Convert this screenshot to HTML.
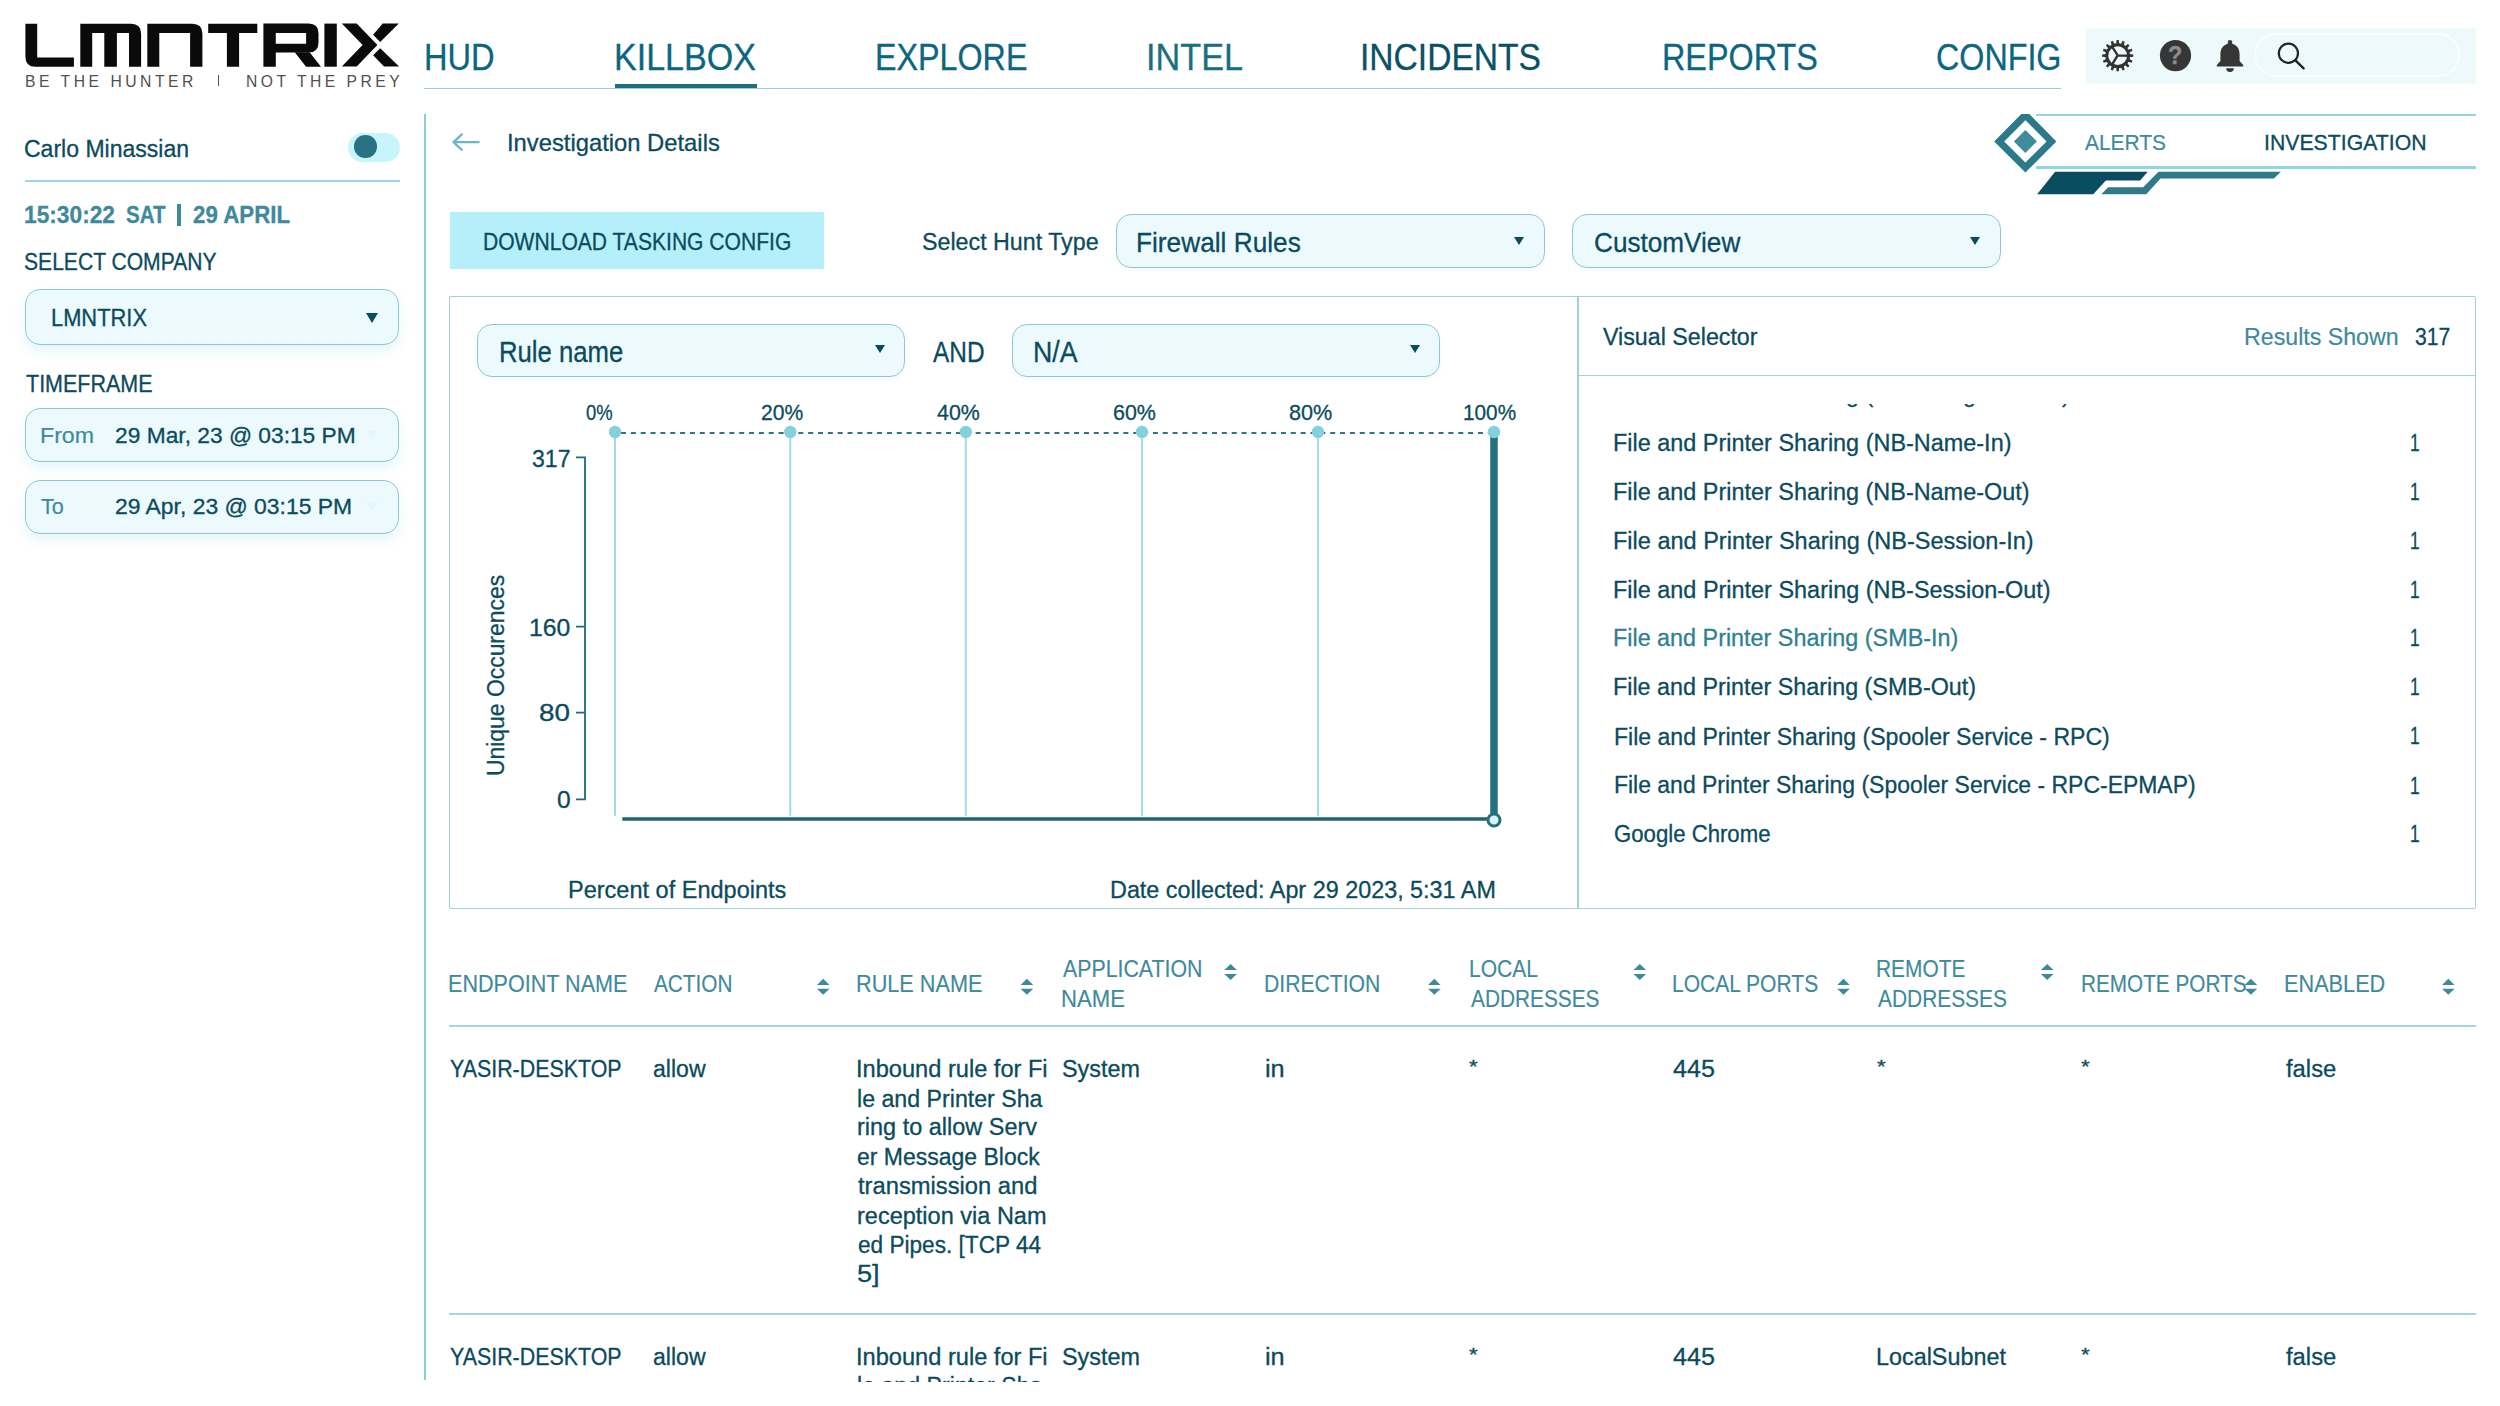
<!DOCTYPE html>
<html><head><meta charset="utf-8"><title>LMNTRIX Killbox</title>
<style>
html,body{margin:0;padding:0;background:#ffffff;width:2500px;height:1406px;overflow:hidden;position:relative}
body{font-family:"Liberation Sans",sans-serif}
.t{position:absolute;white-space:pre;line-height:1;transform-origin:0 0;-webkit-text-stroke:0.3px currentColor}
.dd{position:absolute;box-sizing:border-box;border:1.5px solid #92c6d2;background:#ecfafd;border-radius:15px;box-shadow:0 2px 4px rgba(150,200,215,0.12)}
.tri{position:absolute;width:0;height:0;border-left:6px solid transparent;border-right:6px solid transparent;border-top:9px solid #0b4b5d}
svg{position:absolute;left:0;top:0;overflow:visible}
</style></head><body>
<svg width="2500" height="1406" viewBox="0 0 2500 1406">
<path fill="#0a0a0a" d="M25.4,23.8 H37.2 V57.6 H73.9 V66.7 H35.4 Q25.4,66.7 25.4,56.7 Z"/>
<path fill="#0a0a0a" d="M80.3,23.8 H131.1 Q141.1,23.8 141.1,33.8 V66.7 H129 V32.9 H116.9 V66.7 H104.3 V32.9 H92.2 V66.7 H80.3 Z"/>
<path fill="#0a0a0a" d="M147.3,23.8 H192.4 Q202.4,23.8 202.4,33.8 V66.7 H190.1 V32.9 H159.3 V66.7 H147.3 Z"/>
<path fill="#0a0a0a" d="M208.2,23.8 H257.3 V32.9 H239.1 V66.7 H226.9 V32.9 H208.2 Z"/>
<path fill="#0a0a0a" fill-rule="evenodd" d="M263.4,23.6 H308.5 Q318.5,23.6 318.5,33.6 V42.5 Q318.5,52.5 308.5,52.5 H275.8 V66.7 H263.4 Z M275.8,33 H306.1 V43.8 H275.8 Z"/>
<path fill="#0a0a0a" d="M294.7,52.3 L309.6,52.3 L321,66.7 L306.1,66.7 Z"/>
<path fill="#0a0a0a" d="M324.4,23.6 H336.8 V66.7 H324.4 Z"/>
<path fill="#0a0a0a" d="M341.8,23.5 L356.7,23.5 L377.4,45.1 L356.7,66.6 L341.8,66.6 L362.6,45.1 Z"/>
<path fill="#0a0a0a" d="M382.7,23.5 L398.8,23.5 L380.2,42 L373.1,34.8 Z"/>
<path fill="#0a0a0a" d="M373.1,55.3 L380.2,48.2 L399.1,66.6 L384,66.6 Z"/>
</svg>
<div class="t" style="left:24.51px;top:72.88px;font-size:16.09px;color:#505050;transform:scaleX(0.9763);-webkit-text-stroke:0;letter-spacing:3.60px;">BE THE HUNTER</div>
<div style="position:absolute;left:217.6px;top:75.4px;width:1.6px;height:11.1px;background:#555"></div>
<div class="t" style="left:245.60px;top:72.88px;font-size:16.09px;color:#505050;transform:scaleX(0.9743);-webkit-text-stroke:0;letter-spacing:3.60px;">NOT THE PREY</div>
<div class="t" style="left:423.99px;top:40.14px;font-size:36.96px;color:#0c6680;transform:scaleX(0.8823);">HUD</div>
<div class="t" style="left:613.99px;top:40.14px;font-size:36.96px;color:#0c6680;transform:scaleX(0.9216);">KILLBOX</div>
<div class="t" style="left:874.86px;top:40.14px;font-size:36.96px;color:#0c6680;transform:scaleX(0.8731);">EXPLORE</div>
<div class="t" style="left:1145.80px;top:40.14px;font-size:36.96px;color:#196f7f;transform:scaleX(0.9270);">INTEL</div>
<div class="t" style="left:1360.24px;top:40.14px;font-size:36.96px;color:#0a5163;transform:scaleX(0.9087);">INCIDENTS</div>
<div class="t" style="left:1661.58px;top:40.14px;font-size:36.96px;color:#0c6680;transform:scaleX(0.8750);">REPORTS</div>
<div class="t" style="left:1935.89px;top:40.14px;font-size:36.96px;color:#0c6680;transform:scaleX(0.8731);">CONFIG</div>
<div style="position:absolute;left:424.0px;top:87.7px;width:1637.0px;height:1.6px;background:#9ccfdc"></div>
<div style="position:absolute;left:614.6px;top:84.2px;width:142.0px;height:4.0px;background:#1b6d7f"></div>
<div style="position:absolute;left:2086.0px;top:28.0px;width:390.0px;height:55.5px;background:#eef9fb"></div>
<div style="position:absolute;left:2254.0px;top:33.4px;width:206.0px;height:43.6px;box-sizing:border-box;border:2px solid rgba(255,255,255,0.6);border-radius:22px"></div>
<svg width="2500" height="1406" viewBox="0 0 2500 1406">
<g transform="translate(2117.7,55.7)" fill="#333"><path d="M-1.6,-11 L-1.1,-15.6 L1.1,-15.6 L1.6,-11 Z" transform="rotate(0.0)"/><path d="M-1.6,-11 L-1.1,-15.6 L1.1,-15.6 L1.6,-11 Z" transform="rotate(22.5)"/><path d="M-1.6,-11 L-1.1,-15.6 L1.1,-15.6 L1.6,-11 Z" transform="rotate(45.0)"/><path d="M-1.6,-11 L-1.1,-15.6 L1.1,-15.6 L1.6,-11 Z" transform="rotate(67.5)"/><path d="M-1.6,-11 L-1.1,-15.6 L1.1,-15.6 L1.6,-11 Z" transform="rotate(90.0)"/><path d="M-1.6,-11 L-1.1,-15.6 L1.1,-15.6 L1.6,-11 Z" transform="rotate(112.5)"/><path d="M-1.6,-11 L-1.1,-15.6 L1.1,-15.6 L1.6,-11 Z" transform="rotate(135.0)"/><path d="M-1.6,-11 L-1.1,-15.6 L1.1,-15.6 L1.6,-11 Z" transform="rotate(157.5)"/><path d="M-1.6,-11 L-1.1,-15.6 L1.1,-15.6 L1.6,-11 Z" transform="rotate(180.0)"/><path d="M-1.6,-11 L-1.1,-15.6 L1.1,-15.6 L1.6,-11 Z" transform="rotate(202.5)"/><path d="M-1.6,-11 L-1.1,-15.6 L1.1,-15.6 L1.6,-11 Z" transform="rotate(225.0)"/><path d="M-1.6,-11 L-1.1,-15.6 L1.1,-15.6 L1.6,-11 Z" transform="rotate(247.5)"/><path d="M-1.6,-11 L-1.1,-15.6 L1.1,-15.6 L1.6,-11 Z" transform="rotate(270.0)"/><path d="M-1.6,-11 L-1.1,-15.6 L1.1,-15.6 L1.6,-11 Z" transform="rotate(292.5)"/><path d="M-1.6,-11 L-1.1,-15.6 L1.1,-15.6 L1.6,-11 Z" transform="rotate(315.0)"/><path d="M-1.6,-11 L-1.1,-15.6 L1.1,-15.6 L1.6,-11 Z" transform="rotate(337.5)"/>
<circle r="10.9" fill="none" stroke="#333" stroke-width="3"/>
<path d="M0,-0.3 L10.5,0 M0,-0.3 L-5.3,-8.6 M0,-0.3 L-5.6,8.8" stroke="#333" stroke-width="2.4" fill="none"/>
</g>
<circle cx="2175.5" cy="55.6" r="15.6" fill="#363636"/>
<path fill="#363636" d="M2230,40 a2.2,2.2 0 0 1 2.2,2.2 v1.6 C2238,45.3 2239.6,50 2239.6,55 V61 L2243.2,65 V66.6 H2216.8 V65 L2220.4,61 V55 C2220.4,50 2222,45.3 2227.8,43.8 V42.2 a2.2,2.2 0 0 1 2.2,-2.2 Z"/>
<path fill="#363636" d="M2226.2,68.2 H2233.8 A3.8,3.8 0 0 1 2226.2,68.2 Z"/>
<circle cx="2288.4" cy="53.3" r="9.6" fill="none" stroke="#222" stroke-width="2.2"/>
<path d="M2295.4,60.3 L2303.6,68.3" stroke="#222" stroke-width="2.4" stroke-linecap="round"/>
</svg>
<div class="t" style="left:2168.39px;top:42.99px;font-size:25.36px;color:#8c8c8c;font-weight:700;transform:scaleX(0.9245);">?</div>
<div class="t" style="left:23.97px;top:137.54px;font-size:23.48px;color:#0b4b5d;transform:scaleX(0.9809);">Carlo Minassian</div>
<div style="position:absolute;left:348.2px;top:132.8px;width:51.5px;height:29.0px;background:#c8f5fb;border-radius:15px"></div>
<div style="position:absolute;left:354.1px;top:135.4px;width:22.6px;height:22.6px;background:#267282;border-radius:50%"></div>
<div style="position:absolute;left:24.8px;top:179.8px;width:375.2px;height:2.2px;background:#9dd5e0"></div>
<div class="t" style="left:23.94px;top:204.29px;font-size:23.19px;color:#3e8a9c;font-weight:700;transform:scaleX(0.9806);">15:30:22</div>
<div class="t" style="left:125.51px;top:204.29px;font-size:23.19px;color:#3e8a9c;font-weight:700;transform:scaleX(0.8864);">SAT</div>
<div style="position:absolute;left:177.4px;top:204.2px;width:3.6px;height:22.0px;background:#3e8a9c"></div>
<div class="t" style="left:193.11px;top:204.29px;font-size:23.19px;color:#3e8a9c;font-weight:700;transform:scaleX(0.9614);">29 APRIL</div>
<div class="t" style="left:24.14px;top:251.09px;font-size:23.19px;color:#0b4b5d;transform:scaleX(0.9093);">SELECT COMPANY</div>
<div style="position:absolute;left:24.9px;top:289.3px;width:374.1px;height:56.0px;box-sizing:border-box;border:1.5px solid #92c6d2;background:#ecfafd;border-radius:15px;box-shadow:0 6px 12px rgba(150,215,230,0.25)"></div>
<div class="t" style="left:51.29px;top:305.82px;font-size:23.91px;color:#0b4b5d;transform:scaleX(0.9146);">LMNTRIX</div>
<div class="tri" style="left:366.2px;top:312.5px;border-left-width:6.2px;border-right-width:6.2px;border-top-width:10px"></div>
<div class="t" style="left:25.61px;top:373.29px;font-size:23.19px;color:#0b4b5d;transform:scaleX(0.9271);">TIMEFRAME</div>
<div style="position:absolute;left:24.9px;top:408.0px;width:374.1px;height:54.4px;box-sizing:border-box;border:1.5px solid #92c6d2;background:#ecfafd;border-radius:15px;box-shadow:0 6px 12px rgba(150,215,230,0.25)"></div>
<div style="position:absolute;left:24.9px;top:479.5px;width:374.1px;height:54.1px;box-sizing:border-box;border:1.5px solid #92c6d2;background:#ecfafd;border-radius:15px;box-shadow:0 6px 12px rgba(150,215,230,0.25)"></div>
<div class="t" style="left:40.02px;top:424.41px;font-size:22.75px;color:#3e8a9c;transform:scaleX(1.0182);-webkit-text-stroke-width:0.2px;">From</div>
<div class="t" style="left:115.10px;top:424.41px;font-size:22.75px;color:#0b4b5d;">29 Mar, 23 @ 03:15 PM</div>
<div class="t" style="left:40.92px;top:495.41px;font-size:22.75px;color:#3e8a9c;transform:scaleX(0.9496);-webkit-text-stroke-width:0.2px;">To</div>
<div class="t" style="left:115.44px;top:495.41px;font-size:22.75px;color:#0b4b5d;transform:scaleX(1.0064);">29 Apr, 23 @ 03:15 PM</div>
<div class="tri" style="left:366px;top:431px;border-top-color:#e4f6fa"></div>
<div class="tri" style="left:366px;top:502px;border-top-color:#e4f6fa"></div>
<div style="position:absolute;left:423.6px;top:114.2px;width:2.8px;height:1266.0px;background:#8acde0"></div>
<svg width="2500" height="1406" viewBox="0 0 2500 1406">
<path d="M478.6,142.1 H453.5 M461.8,134.4 L453.5,142.1 L461.8,149.8" fill="none" stroke="#6ab8c6" stroke-width="2.3" stroke-linecap="round" stroke-linejoin="round"/>
<path fill="#2b7a8a" fill-rule="evenodd" d="M2021.3,114.1 L2029.3,114.1 L2056.4,141.4 L2025.4,172.6 L1994.2,141.4 Z M2025.4,120.2 L2004.2,141.4 L2025.4,162.6 L2046.6,141.4 Z"/>
<path fill="#3f8c9b" d="M2025.4,129.9 L2036.9,141.4 L2025.4,152.9 L2013.9,141.4 Z"/>
<path fill="#0a4d60" d="M2037.1,194.2 L2055.1,171.8 L2147.7,171.8 L2140.1,180.6 L2105.9,180.6 L2093.2,194.2 Z"/>
<path fill="#2e7a88" d="M2101.4,194.2 L2108.1,187.3 L2143.2,187.3 L2158.5,171.8 L2280.9,171.8 L2273.8,178.5 L2160.5,178.5 L2146.3,194.2 Z"/>
</svg>
<div class="t" style="left:507.39px;top:131.69px;font-size:23.19px;color:#0b4b5d;transform:scaleX(1.0255);">Investigation Details</div>
<div style="position:absolute;left:2036.0px;top:113.9px;width:440.0px;height:2.6px;background:#8fd6e3"></div>
<div style="position:absolute;left:2036.0px;top:166.0px;width:440.0px;height:2.6px;background:#8fd6e3"></div>
<div class="t" style="left:2085.49px;top:131.70px;font-size:22.17px;color:#3f8b9b;transform:scaleX(0.9452);-webkit-text-stroke-width:0.2px;">ALERTS</div>
<div class="t" style="left:2264.30px;top:131.70px;font-size:22.17px;color:#0b4b5d;transform:scaleX(0.9591);">INVESTIGATION</div>
<div style="position:absolute;left:449.5px;top:211.7px;width:374.6px;height:57.1px;background:#b5f0fa"></div>
<div class="t" style="left:482.93px;top:229.65px;font-size:24.06px;color:#0b4b5d;transform:scaleX(0.8762);">DOWNLOAD TASKING CONFIG</div>
<div class="t" style="left:922.33px;top:229.65px;font-size:24.06px;color:#0b4b5d;transform:scaleX(0.9667);">Select Hunt Type</div>
<div class="dd" style="left:1115.5px;top:214.0px;width:429.1px;height:54.1px"></div>
<div class="t" style="left:1136.44px;top:228.03px;font-size:28.26px;color:#0b4b5d;transform:scaleX(0.9288);">Firewall Rules</div>
<div class="tri" style="left:1514.0px;top:236.8px;border-left-width:5.2px;border-right-width:5.2px;border-top-width:8.5px"></div>
<div class="dd" style="left:1571.8px;top:214.0px;width:428.8px;height:54.1px"></div>
<div class="t" style="left:1593.50px;top:228.03px;font-size:28.26px;color:#0b4b5d;transform:scaleX(0.9254);">CustomView</div>
<div class="tri" style="left:1970.4px;top:236.8px;border-left-width:5.2px;border-right-width:5.2px;border-top-width:8.5px"></div>
<div style="position:absolute;left:449.3px;top:295.5px;width:2026.7px;height:613.7px;box-sizing:border-box;border:1.6px solid #a0d0d9;border-radius:2px"></div>
<div style="position:absolute;left:1576.8px;top:295.5px;width:1.8px;height:613.7px;background:#a0d0d9"></div>
<div style="position:absolute;left:1577.8px;top:374.6px;width:898.2px;height:1.8px;background:#a0d0d9"></div>
<div class="dd" style="left:477.1px;top:323.5px;width:428.3px;height:53.4px"></div>
<div class="t" style="left:498.76px;top:338.01px;font-size:28.70px;color:#0b4b5d;transform:scaleX(0.8961);">Rule name</div>
<div class="tri" style="left:875.3px;top:345.3px;border-left-width:5.2px;border-right-width:5.2px;border-top-width:8.4px"></div>
<div class="t" style="left:933.46px;top:338.01px;font-size:28.70px;color:#0b4b5d;transform:scaleX(0.8506);">AND</div>
<div class="dd" style="left:1011.7px;top:323.5px;width:428.3px;height:53.4px"></div>
<div class="t" style="left:1032.98px;top:338.01px;font-size:28.70px;color:#0b4b5d;transform:scaleX(0.9320);">N/A</div>
<div class="tri" style="left:1409.8px;top:345.3px;border-left-width:5.2px;border-right-width:5.2px;border-top-width:8.4px"></div>
<div class="t" style="left:586.44px;top:400.84px;font-size:22.90px;color:#0b4b5d;transform:scaleX(0.8064);">0%</div>
<div class="t" style="left:761.20px;top:400.84px;font-size:22.90px;color:#0b4b5d;transform:scaleX(0.9216);">20%</div>
<div class="t" style="left:937.24px;top:400.84px;font-size:22.90px;color:#0b4b5d;transform:scaleX(0.9340);">40%</div>
<div class="t" style="left:1112.67px;top:400.84px;font-size:22.90px;color:#0b4b5d;transform:scaleX(0.9368);">60%</div>
<div class="t" style="left:1288.74px;top:400.84px;font-size:22.90px;color:#0b4b5d;transform:scaleX(0.9455);">80%</div>
<div class="t" style="left:1463.01px;top:400.84px;font-size:22.90px;color:#0b4b5d;transform:scaleX(0.9072);">100%</div>
<svg width="2500" height="1406" viewBox="0 0 2500 1406"><line x1="615.0" y1="432" x2="615.0" y2="815.8" stroke="#9edcea" stroke-width="2"/><line x1="790.3" y1="432" x2="790.3" y2="815.8" stroke="#9edcea" stroke-width="2"/><line x1="965.8" y1="432" x2="965.8" y2="815.8" stroke="#9edcea" stroke-width="2"/><line x1="1142.0" y1="432" x2="1142.0" y2="815.8" stroke="#9edcea" stroke-width="2"/><line x1="1318.0" y1="432" x2="1318.0" y2="815.8" stroke="#9edcea" stroke-width="2"/><line x1="621" y1="433" x2="1494" y2="433" stroke="#2f7584" stroke-width="1.8" stroke-dasharray="5 4.85"/><line x1="1494" y1="432" x2="1494" y2="820" stroke="#24707f" stroke-width="7.5"/><line x1="622.3" y1="819" x2="1494" y2="819" stroke="#1f6474" stroke-width="3.5"/><circle cx="615.0" cy="432" r="6.2" fill="#86cfdd"/><circle cx="790.3" cy="432" r="6.2" fill="#86cfdd"/><circle cx="965.8" cy="432" r="6.2" fill="#86cfdd"/><circle cx="1142.0" cy="432" r="6.2" fill="#86cfdd"/><circle cx="1318.0" cy="432" r="6.2" fill="#86cfdd"/><circle cx="1494.0" cy="432" r="6.2" fill="#86cfdd"/><circle cx="1494" cy="820" r="6" fill="#d8f3f8" stroke="#24707f" stroke-width="3"/><path d="M576,457.3 H585 V799.3 H576 M576,626.7 H585 M576,712.7 H585" fill="none" stroke="#1f6b7c" stroke-width="1.8"/></svg>
<div class="t" style="left:532.13px;top:447.22px;font-size:23.91px;color:#0b4b5d;transform:scaleX(0.9641);">317</div>
<div class="t" style="left:529.38px;top:616.22px;font-size:23.91px;color:#0b4b5d;transform:scaleX(1.0375);">160</div>
<div class="t" style="left:539.45px;top:701.22px;font-size:23.91px;color:#0b4b5d;transform:scaleX(1.1638);">80</div>
<div class="t" style="left:556.63px;top:788.22px;font-size:23.91px;color:#0b4b5d;transform:scaleX(1.0256);">0</div>
<div class="t" style="left:484.03px;top:775.72px;font-size:24.20px;color:#0b4b5d;transform:rotate(-90deg) scaleX(0.9467)">Unique Occurences</div>
<div class="t" style="left:567.55px;top:878.97px;font-size:23.62px;color:#0b4b5d;transform:scaleX(0.9960);">Percent of Endpoints</div>
<div class="t" style="left:1110.21px;top:878.10px;font-size:24.35px;color:#0b4b5d;transform:scaleX(0.9600);">Date collected: Apr 29 2023, 5:31 AM</div>
<div class="t" style="left:1603.41px;top:325.36px;font-size:24.64px;color:#0b4b5d;transform:scaleX(0.9434);">Visual Selector</div>
<div class="t" style="left:2244.21px;top:325.36px;font-size:24.64px;color:#3e8a9b;transform:scaleX(0.9416);-webkit-text-stroke-width:0.2px;">Results Shown</div>
<div class="t" style="left:2415.16px;top:325.36px;font-size:24.64px;color:#0b4b5d;transform:scaleX(0.8583);">317</div>
<div class="t" style="left:1613.40px;top:431.36px;font-size:24.64px;color:#0b4b5d;transform:scaleX(0.9515);">File and Printer Sharing (NB-Name-In)</div>
<div class="t" style="left:2409.50px;top:431.36px;font-size:24.64px;color:#0b4b5d;transform:scaleX(0.7024);">1</div>
<div class="t" style="left:1613.40px;top:479.58px;font-size:24.64px;color:#0b4b5d;transform:scaleX(0.9511);">File and Printer Sharing (NB-Name-Out)</div>
<div class="t" style="left:2409.50px;top:480.10px;font-size:24.64px;color:#0b4b5d;transform:scaleX(0.7024);">1</div>
<div class="t" style="left:1613.40px;top:528.80px;font-size:24.64px;color:#0b4b5d;transform:scaleX(0.9545);">File and Printer Sharing (NB-Session-In)</div>
<div class="t" style="left:2409.50px;top:528.84px;font-size:24.64px;color:#0b4b5d;transform:scaleX(0.7024);">1</div>
<div class="t" style="left:1613.40px;top:578.02px;font-size:24.64px;color:#0b4b5d;transform:scaleX(0.9518);">File and Printer Sharing (NB-Session-Out)</div>
<div class="t" style="left:2409.50px;top:577.58px;font-size:24.64px;color:#0b4b5d;transform:scaleX(0.7024);">1</div>
<div class="t" style="left:1613.41px;top:626.24px;font-size:24.64px;color:#2f8090;transform:scaleX(0.9484);">File and Printer Sharing (SMB-In)</div>
<div class="t" style="left:2409.50px;top:626.32px;font-size:24.64px;color:#0b4b5d;transform:scaleX(0.7024);">1</div>
<div class="t" style="left:1613.41px;top:675.46px;font-size:24.64px;color:#0b4b5d;transform:scaleX(0.9475);">File and Printer Sharing (SMB-Out)</div>
<div class="t" style="left:2409.50px;top:675.06px;font-size:24.64px;color:#0b4b5d;transform:scaleX(0.7024);">1</div>
<div class="t" style="left:1613.52px;top:724.68px;font-size:24.64px;color:#0b4b5d;transform:scaleX(0.9361);">File and Printer Sharing (Spooler Service - RPC)</div>
<div class="t" style="left:2409.50px;top:723.80px;font-size:24.64px;color:#0b4b5d;transform:scaleX(0.7024);">1</div>
<div class="t" style="left:1613.53px;top:772.90px;font-size:24.64px;color:#0b4b5d;transform:scaleX(0.9320);">File and Printer Sharing (Spooler Service - RPC-EPMAP)</div>
<div class="t" style="left:2409.50px;top:773.54px;font-size:24.64px;color:#0b4b5d;transform:scaleX(0.7024);">1</div>
<div class="t" style="left:1614.10px;top:822.12px;font-size:24.64px;color:#0b4b5d;transform:scaleX(0.9002);">Google Chrome</div>
<div class="t" style="left:2409.50px;top:822.28px;font-size:24.64px;color:#0b4b5d;transform:scaleX(0.7024);">1</div>
<div style="position:absolute;left:1580px;top:404px;width:890px;height:20px;overflow:hidden">
<div class="t" style="left:33.40px;top:-22.04px;font-size:24.64px;color:#0b4b5d;transform:scaleX(0.9509);">File and Printer Sharing (NB-Datagram-Out)</div>
</div>
<div class="t" style="left:448.44px;top:972.36px;font-size:24.64px;color:#3e8a9b;transform:scaleX(0.8759);-webkit-text-stroke-width:0.15px;">ENDPOINT NAME</div>
<div class="t" style="left:653.71px;top:972.36px;font-size:24.64px;color:#3e8a9b;transform:scaleX(0.8439);-webkit-text-stroke-width:0.15px;">ACTION</div>
<svg width="2500" height="1406" viewBox="0 0 2500 1406"><path fill="#3e8a9b" d="M816.9,984.9 L823.2,978.8 L829.5,984.9 Z M816.9,988.7 L829.5,988.7 L823.2,994.8 Z"/></svg>
<div class="t" style="left:856.21px;top:972.36px;font-size:24.64px;color:#3e8a9b;transform:scaleX(0.8802);-webkit-text-stroke-width:0.15px;">RULE NAME</div>
<svg width="2500" height="1406" viewBox="0 0 2500 1406"><path fill="#3e8a9b" d="M1020.6,984.9 L1026.9,978.8 L1033.2,984.9 Z M1020.6,988.7 L1033.2,988.7 L1026.9,994.8 Z"/></svg>
<div class="t" style="left:1062.91px;top:957.10px;font-size:24.35px;color:#3e8a9b;transform:scaleX(0.8761);-webkit-text-stroke-width:0.15px;">APPLICATION</div>
<div class="t" style="left:1060.61px;top:987.10px;font-size:24.35px;color:#3e8a9b;transform:scaleX(0.9084);-webkit-text-stroke-width:0.15px;">NAME</div>
<svg width="2500" height="1406" viewBox="0 0 2500 1406"><path fill="#3e8a9b" d="M1224.3,970.1 L1230.6,964.0 L1236.9,970.1 Z M1224.3,973.9 L1236.9,973.9 L1230.6,980.0 Z"/></svg>
<div class="t" style="left:1263.84px;top:972.36px;font-size:24.64px;color:#3e8a9b;transform:scaleX(0.8590);-webkit-text-stroke-width:0.15px;">DIRECTION</div>
<svg width="2500" height="1406" viewBox="0 0 2500 1406"><path fill="#3e8a9b" d="M1428.0,984.9 L1434.3,978.8 L1440.6,984.9 Z M1428.0,988.7 L1440.6,988.7 L1434.3,994.8 Z"/></svg>
<div class="t" style="left:1468.65px;top:957.10px;font-size:24.35px;color:#3e8a9b;transform:scaleX(0.8651);-webkit-text-stroke-width:0.15px;">LOCAL</div>
<div class="t" style="left:1470.51px;top:987.10px;font-size:24.35px;color:#3e8a9b;transform:scaleX(0.8554);-webkit-text-stroke-width:0.15px;">ADDRESSES</div>
<svg width="2500" height="1406" viewBox="0 0 2500 1406"><path fill="#3e8a9b" d="M1633.5,970.1 L1639.8,964.0 L1646.1,970.1 Z M1633.5,973.9 L1646.1,973.9 L1639.8,980.0 Z"/></svg>
<div class="t" style="left:1671.96px;top:972.36px;font-size:24.64px;color:#3e8a9b;transform:scaleX(0.8545);-webkit-text-stroke-width:0.15px;">LOCAL PORTS</div>
<svg width="2500" height="1406" viewBox="0 0 2500 1406"><path fill="#3e8a9b" d="M1837.2,984.9 L1843.5,978.8 L1849.8,984.9 Z M1837.2,988.7 L1849.8,988.7 L1843.5,994.8 Z"/></svg>
<div class="t" style="left:1876.20px;top:957.10px;font-size:24.35px;color:#3e8a9b;transform:scaleX(0.8578);-webkit-text-stroke-width:0.15px;">REMOTE</div>
<div class="t" style="left:1877.91px;top:987.10px;font-size:24.35px;color:#3e8a9b;transform:scaleX(0.8587);-webkit-text-stroke-width:0.15px;">ADDRESSES</div>
<svg width="2500" height="1406" viewBox="0 0 2500 1406"><path fill="#3e8a9b" d="M2040.9,970.1 L2047.2,964.0 L2053.5,970.1 Z M2040.9,973.9 L2053.5,973.9 L2047.2,980.0 Z"/></svg>
<div class="t" style="left:2080.63px;top:972.36px;font-size:24.64px;color:#3e8a9b;transform:scaleX(0.8419);-webkit-text-stroke-width:0.15px;">REMOTE PORTS</div>
<svg width="2500" height="1406" viewBox="0 0 2500 1406"><path fill="#3e8a9b" d="M2244.6,984.9 L2250.9,978.8 L2257.2,984.9 Z M2244.6,988.7 L2257.2,988.7 L2250.9,994.8 Z"/></svg>
<div class="t" style="left:2284.01px;top:972.36px;font-size:24.64px;color:#3e8a9b;transform:scaleX(0.8811);-webkit-text-stroke-width:0.15px;">ENABLED</div>
<svg width="2500" height="1406" viewBox="0 0 2500 1406"><path fill="#3e8a9b" d="M2442.0,984.9 L2448.3,978.8 L2454.6,984.9 Z M2442.0,988.7 L2454.6,988.7 L2448.3,994.8 Z"/></svg>
<div style="position:absolute;left:449.4px;top:1025.4px;width:2026.6px;height:2.0px;background:#a3d6e0"></div>
<div style="position:absolute;left:449.4px;top:1313.0px;width:2026.6px;height:2.0px;background:#a3d6e0"></div>
<div style="position:absolute;left:0;top:0;width:2500px;height:1381.5px;overflow:hidden">
<div class="t" style="left:449.55px;top:1057.77px;font-size:23.62px;color:#0b4b5d;transform:scaleX(0.9063);">YASIR-DESKTOP</div>
<div class="t" style="left:652.74px;top:1057.77px;font-size:23.62px;color:#0b4b5d;transform:scaleX(0.9766);">allow</div>
<div class="t" style="left:856.00px;top:1057.77px;font-size:23.62px;color:#0b4b5d;">Inbound rule for Fi</div>
<div class="t" style="left:856.69px;top:1087.57px;font-size:23.62px;color:#0b4b5d;transform:scaleX(0.9816);">le and Printer Sha</div>
<div class="t" style="left:856.56px;top:1116.37px;font-size:23.62px;color:#0b4b5d;transform:scaleX(0.9944);">ring to allow Serv</div>
<div class="t" style="left:857.46px;top:1146.17px;font-size:23.62px;color:#0b4b5d;transform:scaleX(0.9737);">er Message Block</div>
<div class="t" style="left:857.85px;top:1174.97px;font-size:23.62px;color:#0b4b5d;transform:scaleX(1.0051);">transmission and</div>
<div class="t" style="left:856.99px;top:1204.77px;font-size:23.62px;color:#0b4b5d;transform:scaleX(0.9962);">reception via Nam</div>
<div class="t" style="left:857.50px;top:1233.57px;font-size:23.62px;color:#0b4b5d;transform:scaleX(0.9578);">ed Pipes. [TCP 44</div>
<div class="t" style="left:856.77px;top:1263.37px;font-size:23.62px;color:#0b4b5d;transform:scaleX(1.1512);">5]</div>
<div class="t" style="left:1061.69px;top:1057.77px;font-size:23.62px;color:#0b4b5d;transform:scaleX(0.9912);">System</div>
<div class="t" style="left:1264.52px;top:1057.77px;font-size:23.62px;color:#0b4b5d;transform:scaleX(1.0700);">in</div>
<div class="t" style="left:1469.09px;top:1058.11px;font-size:18.70px;color:#0b4b5d;transform:scaleX(1.1931);">*</div>
<div class="t" style="left:1673.12px;top:1057.77px;font-size:23.62px;color:#0b4b5d;transform:scaleX(1.0617);">445</div>
<div class="t" style="left:1877.19px;top:1058.11px;font-size:18.70px;color:#0b4b5d;transform:scaleX(1.1931);">*</div>
<div class="t" style="left:2081.39px;top:1058.11px;font-size:18.70px;color:#0b4b5d;transform:scaleX(1.1931);">*</div>
<div class="t" style="left:2285.84px;top:1057.77px;font-size:23.62px;color:#0b4b5d;transform:scaleX(1.0080);">false</div>
<div class="t" style="left:449.55px;top:1345.97px;font-size:23.62px;color:#0b4b5d;transform:scaleX(0.9063);">YASIR-DESKTOP</div>
<div class="t" style="left:652.74px;top:1345.97px;font-size:23.62px;color:#0b4b5d;transform:scaleX(0.9766);">allow</div>
<div class="t" style="left:856.00px;top:1345.97px;font-size:23.62px;color:#0b4b5d;">Inbound rule for Fi</div>
<div class="t" style="left:856.69px;top:1374.77px;font-size:23.62px;color:#0b4b5d;transform:scaleX(0.9816);">le and Printer Sha</div>
<div class="t" style="left:1061.69px;top:1345.97px;font-size:23.62px;color:#0b4b5d;transform:scaleX(0.9912);">System</div>
<div class="t" style="left:1264.52px;top:1345.97px;font-size:23.62px;color:#0b4b5d;transform:scaleX(1.0700);">in</div>
<div class="t" style="left:1469.09px;top:1346.21px;font-size:18.70px;color:#0b4b5d;transform:scaleX(1.1931);">*</div>
<div class="t" style="left:1673.12px;top:1345.97px;font-size:23.62px;color:#0b4b5d;transform:scaleX(1.0617);">445</div>
<div class="t" style="left:1875.61px;top:1345.97px;font-size:23.62px;color:#0b4b5d;transform:scaleX(0.9893);">LocalSubnet</div>
<div class="t" style="left:2081.39px;top:1346.21px;font-size:18.70px;color:#0b4b5d;transform:scaleX(1.1931);">*</div>
<div class="t" style="left:2285.84px;top:1345.97px;font-size:23.62px;color:#0b4b5d;transform:scaleX(1.0080);">false</div>
</div>
</body></html>
